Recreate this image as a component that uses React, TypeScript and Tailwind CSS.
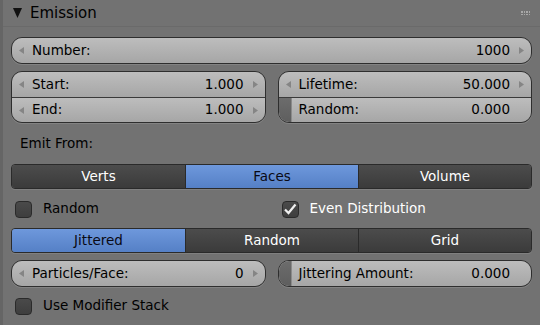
import React from "react";

const font = { fontFamily: '"DejaVu Sans", "Liberation Sans", sans-serif' };

const ArrowL = () => (
	<svg width="5" height="7" viewBox="0 0 5 7" className="shrink-0">
		<polygon points="5,0 0,3.5 5,7" fill="#858585" />
	</svg>
);

const ArrowR = () => (
	<svg width="5" height="7" viewBox="0 0 5 7" className="shrink-0">
		<polygon points="0,0 5,3.5 0,7" fill="#858585" />
	</svg>
);

// a number field row (with arrows) or a slider row (with the dark fill strip)
const FieldRow = ({ label, value, slider, divider }: { label: string; value: string; slider?: boolean; divider?: boolean }) => (
	<div
		className={
			"relative flex items-center h-[25px] bg-gradient-to-b from-[#bdbdbd] to-[#a6a6a6] text-[13.5px] text-black " +
			(divider ? "border-t border-[#3a3a3a]" : "")
		}
	>
		{slider ? (
			<div className="absolute left-0 top-0 bottom-0 w-[13px] bg-gradient-to-b from-[#6c6c6c] to-[#5e5e5e] border-r border-[#8a8a8a]" />
		) : (
			<div className="absolute left-[7px] top-0 bottom-0 flex items-center">
				<ArrowL />
			</div>
		)}
		<span className="pl-[20px] flex-1 leading-none">{label}</span>
		<span className="pr-[21px] leading-none">{value}</span>
		{!slider && (
			<div className="absolute right-[7px] top-0 bottom-0 flex items-center">
				<ArrowR />
			</div>
		)}
	</div>
);

const Group = ({ children }: { children: React.ReactNode }) => (
	<div className="rounded-[11px] border border-[#2e2e2e] overflow-hidden shadow-[0_1px_0_rgba(255,255,255,0.12)]">{children}</div>
);

const Toggle = ({ items, active }: { items: string[]; active: number }) => (
	<div className="grid grid-cols-3 h-[25px] rounded-[4px] border border-[#2a2a2a] overflow-hidden text-[13.5px] shadow-[0_1px_0_rgba(255,255,255,0.1)]">
		{items.map((it, i) => (
			<div
				key={it}
				className={
					"flex items-center justify-center leading-none " +
					(i > 0 ? "border-l border-[#2a2a2a] " : "") +
					(i === active
						? "bg-gradient-to-b from-[#6e98dc] to-[#5580c6] text-[#0a0a14]"
						: "bg-gradient-to-b from-[#4c4c4c] to-[#3b3b3b] text-white")
				}
			>
				{it}
			</div>
		))}
	</div>
);

const Check = ({ label, checked }: { label: string; checked?: boolean }) => (
	<div className="flex items-center h-[26px]">
		<div className="w-[17px] h-[17px] ml-[4px] rounded-[4px] border border-[#2a2a2a] bg-gradient-to-b from-[#4a4a4a] to-[#3e3e3e] flex items-center justify-center">
			{checked && (
				<svg width="14" height="12" viewBox="0 0 14 12">
					<path d="M2 6.5 L5.5 10 L12.5 1.5" stroke="#f0f0f0" strokeWidth="2.2" fill="none" />
				</svg>
			)}
		</div>
		<span className={"ml-[11px] text-[13.5px] leading-none " + (checked ? "text-white" : "text-black")}>{label}</span>
	</div>
);

export default function App() {
	return (
		<div style={font} className="w-[540px] h-[325px] bg-[#727272] border-l-[3px] border-[#656565] overflow-hidden">
			{/* header */}
			<div className="flex items-center h-[27px] border-b border-[#6a6a6a] pl-[10px] pr-[8px]">
				<svg width="9" height="10" viewBox="0 0 9 10">
					<polygon points="0,0 9,0 4.5,10" fill="#111" />
				</svg>
				<span className="ml-[8px] text-[15px] text-black leading-none">Emission</span>
				<div className="ml-auto grid grid-cols-4 gap-[1px] mr-[2px]">
					{Array.from({ length: 8 }).map((_, i) => (
						<div key={i} className="w-[1.5px] h-[1.5px] bg-[#a8a8a8]" />
					))}
				</div>
			</div>

			<div className="pl-[8px] pr-[8px] pt-[10px]">
				<Group>
					<FieldRow label="Number:" value="1000" />
				</Group>

				<div className="grid grid-cols-2 gap-[12px] mt-[7px]">
					<Group>
						<FieldRow label="Start:" value="1.000" />
						<FieldRow label="End:" value="1.000" divider />
					</Group>
					<Group>
						<FieldRow label="Lifetime:" value="50.000" />
						<FieldRow label="Random:" value="0.000" slider divider />
					</Group>
				</div>

				<div className="h-[41px] flex items-center pl-[9px] text-[13.5px] text-black">Emit From:</div>

				<Toggle items={["Verts", "Faces", "Volume"]} active={1} />

				<div className="grid grid-cols-2 gap-[12px] mt-[7px]">
					<Check label="Random" />
					<Check label="Even Distribution" checked />
				</div>

				<div className="mt-[6px]">
					<Toggle items={["Jittered", "Random", "Grid"]} active={0} />
				</div>

				<div className="grid grid-cols-2 gap-[12px] mt-[7px]">
					<Group>
						<FieldRow label="Particles/Face:" value="0" />
					</Group>
					<Group>
						<FieldRow label="Jittering Amount:" value="0.000" slider />
					</Group>
				</div>

				<div className="mt-[6px]">
					<Check label="Use Modifier Stack" />
				</div>
			</div>
		</div>
	);
}
